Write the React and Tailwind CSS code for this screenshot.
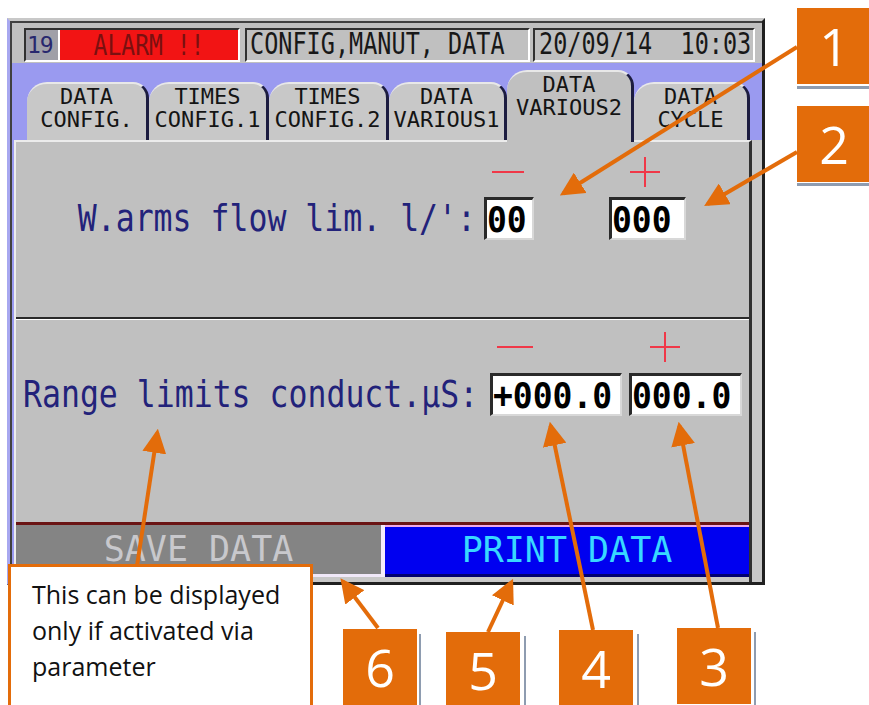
import React from "react";

const mono = { fontFamily: '"DejaVu Sans Mono", "Liberation Mono", monospace' };

const tabs = [
  { top: "DATA", bottom: "CONFIG.", w: "w-[122px]" },
  { top: "TIMES", bottom: "CONFIG.1", w: "w-[120px]" },
  { top: "TIMES", bottom: "CONFIG.2", w: "w-[120px]" },
  { top: "DATA", bottom: "VARIOUS1", w: "w-[118px]" },
  { top: "DATA", bottom: "VARIOUS2", w: "w-[127px]", active: true },
  { top: "DATA", bottom: "CYCLE", w: "w-[116px]" },
];

function Minus({ w = "w-[32px]" }) {
  return <div className={`${w} h-[2px] bg-[#f03848]`} />;
}

function Plus() {
  return (
    <svg width="30" height="30" viewBox="0 0 30 30">
      <path d="M0 15H30M15 0V30" stroke="#f03848" strokeWidth="2" />
    </svg>
  );
}

function Field({ value, w }) {
  return (
    <div
      className={`${w} h-[43px] bg-white border-t-[3px] border-l-[3px] border-[#2a2a2a] border-r-2 border-b-2 border-r-[#d8d8d8] border-b-[#d8d8d8] flex items-center overflow-hidden`}
    >
      <span className="text-[33px] font-bold text-black leading-none scale-y-110 inline-block whitespace-pre" style={mono}>
        {value}
      </span>
    </div>
  );
}

function Callout({ n, className }) {
  return (
    <div className={`absolute w-[74px] h-[76px] bg-[#e36c0a] flex items-center justify-center text-white text-[52px] leading-none ${className}`} style={{ fontFamily: '"Open Sans", sans-serif' }}>
      {n}
    </div>
  );
}

function Screen() {
  return (
    <div className="ml-[7px] mt-[18px] w-[758px] h-[567px] border-l-[3px] border-l-[#a8a8f0] border-t-[3px] border-t-[#c8c8c8] border-r-[3px] border-r-[#202020] border-b-[3px] border-b-[#202020] bg-[#c0c0c0] flex flex-col">
      {/* header */}
      <div className="h-[42px] border-l-2 border-t-2 border-[#404040] flex items-start pt-[5px] pl-[12px]" style={mono}>
        <div className="w-[216px] h-[34px] border-2 border-[#303030] border-r-white border-b-white flex">
          <div className="w-[32px] bg-[#a0a0a8] text-[#28286e] text-[23px] leading-[30px] tracking-[-1px] pl-[1px]">19</div>
          <div className="flex-1 bg-[#f21414] border-l-2 border-white flex items-center justify-center">
            <span className="text-[#7a1010] text-[23px] leading-none scale-y-125 inline-block whitespace-pre">ALARM !!</span>
          </div>
        </div>
        <div className="ml-[5px] w-[285px] h-[34px] border-2 border-[#303030] border-r-white border-b-white pl-[3px] flex items-center overflow-hidden">
          <span className="text-[#181818] text-[23.5px] leading-none scale-y-125 inline-block whitespace-pre">CONFIG,MANUT, DATA</span>
        </div>
        <div className="ml-[3px] w-[222px] h-[34px] border-2 border-[#303030] border-r-white border-b-white pl-[4px] flex items-center overflow-hidden">
          <span className="text-[#181818] text-[23.5px] leading-none scale-y-125 inline-block whitespace-pre">20/09/14  10:03</span>
        </div>
      </div>

      {/* tabs */}
      <div className="h-[77px] bg-[#9a9af0] flex items-end pl-[15px] pr-[4px] border-l-2 border-[#404040]" style={mono}>
        {tabs.map((t, i) => (
          <div
            key={i}
            className={`${t.w} ${t.active ? "h-[72px] bg-[#c0c0c0] z-10 -mb-[2px]" : "h-[58px] bg-[#c8c8c8]"} rounded-tl-[20px] rounded-tr-[16px] border-t-2 border-t-[#e8e8e8] border-r-[3px] border-r-[#1c1c40] flex flex-col items-center justify-start pt-[1px] text-[#141414] text-[22px] leading-[23px] whitespace-pre`}
          >
            <span>{t.top}</span>
            <span>{t.bottom}</span>
          </div>
        ))}
      </div>

      {/* content */}
      <div className="flex-1 flex border-l-2 border-[#404040]">
        <div className="w-[2px] bg-[#9a9af0]" />
        <div className="w-[738px] flex flex-col border-t-2 border-l-2 border-[#ececec] border-r-[3px] border-r-[#303030]">
          {/* section 1 */}
          <div className="h-[175px] pt-[15px]">
            <div className="h-[30px] flex items-center">
              <div className="ml-[476px]"><Minus /></div>
              <div className="ml-[106px]"><Plus /></div>
            </div>
            <div className="mt-[10px] flex items-center">
              <div className="w-[468px] flex justify-end pr-[8px]">
                <span className="text-[31.5px] text-[#22227a] leading-none scale-y-[1.2] inline-block whitespace-pre" style={mono}>W.arms flow lim. l/':</span>
              </div>
              <Field value="00" w="w-[50px]" />
              <div className="ml-[75px]"><Field value="000" w="w-[77px]" /></div>
            </div>
          </div>
          <div className="h-[3px] border-t-2 border-[#2a2a2a] border-b border-b-white" />
          {/* section 2 */}
          <div className="h-[202px] pt-[12px]">
            <div className="h-[30px] flex items-center">
              <div className="ml-[481px]"><Minus w="w-[36px]" /></div>
              <div className="ml-[117px]"><Plus /></div>
            </div>
            <div className="mt-[11px] flex items-center">
              <div className="w-[474px] flex justify-start pl-[7px]">
                <span className="text-[31.5px] text-[#22227a] leading-none scale-y-[1.2] inline-block whitespace-pre" style={mono}>Range limits conduct.µS:</span>
              </div>
              <Field value="+000.0" w="w-[132px]" />
              <div className="ml-[7px]"><Field value="000.0" w="w-[113px]" /></div>
            </div>
          </div>
          {/* buttons */}
          <div className="h-[55px] border-t-[3px] border-[#6a1414] flex" style={mono}>
            <div className="w-[365px] bg-[#848484] border-b-[3px] border-[#f0e8f8] flex items-center justify-center">
              <span className="text-[35px] text-[#c8c8cc] leading-none whitespace-pre">SAVE DATA</span>
            </div>
            <div className="w-[4px] bg-[#f4ecfa]" />
            <div className="flex-1 bg-[#0000f0] border-t-2 border-[#f0a8e8] border-b-[3px] border-b-[#000070] flex items-center justify-center">
              <span className="text-[35px] text-[#38d8ff] leading-none whitespace-pre">PRINT DATA</span>
            </div>
          </div>
          <div className="flex-1 bg-[#c8c8c8]" />
        </div>
        <div className="flex-1 bg-[#c8c8c8]" />
      </div>
    </div>
  );
}

export default function App() {
  const arrows = [
    [797, 47, 548, 203],
    [797, 152, 692, 213],
    [718, 628, 676, 408],
    [593, 630, 547, 408],
    [488, 632, 519, 566],
    [378, 628, 332, 567],
    [137, 566, 160, 415],
  ];
  return (
    <div className="relative w-[869px] h-[705px] bg-white overflow-hidden">
      <Screen />

      {/* callout text */}
      <div
        className="absolute left-[8px] top-[564px] w-[305px] h-[150px] bg-white border-[3px] border-[#e36c0a] pl-[21px] pt-[9px] text-[25px] leading-[36px] text-[#111] whitespace-nowrap"
        style={{ fontFamily: '"Open Sans", "Lato", sans-serif' }}
      >
        This can be displayed
        <br />
        only if activated via
        <br />
        parameter
      </div>

      {/* number callouts */}
      <Callout n="1" className="left-[797px] top-[8px]" />
      <div className="absolute left-[797px] top-[86px] w-[72px] h-[3px] bg-[#8e9cb0]" />
      <Callout n="2" className="left-[797px] top-[106px]" />
      <div className="absolute left-[797px] top-[183px] w-[72px] h-[3px] bg-[#8e9cb0]" />
      <Callout n="6" className="left-[343px] top-[629px]" />
      <div className="absolute left-[419px] top-[634px] w-[2px] h-[71px] bg-[#8e9cb0]" />
      <Callout n="5" className="left-[446px] top-[632px]" />
      <div className="absolute left-[524px] top-[636px] w-[2px] h-[69px] bg-[#8e9cb0]" />
      <Callout n="4" className="left-[559px] top-[630px]" />
      <div className="absolute left-[637px] top-[634px] w-[2px] h-[71px] bg-[#8e9cb0]" />
      <Callout n="3" className="left-[677px] top-[628px]" />
      <div className="absolute left-[754px] top-[632px] w-[2px] h-[73px] bg-[#8e9cb0]" />

      {/* arrows */}
      <svg className="absolute inset-0 pointer-events-none" width="869" height="705" viewBox="0 0 869 705">
        <defs>
          <marker id="head" markerWidth="6" markerHeight="6" refX="5" refY="3" orient="auto" markerUnits="strokeWidth">
            <path d="M0 0L6 3L0 6Z" fill="#e36c0a" />
          </marker>
        </defs>
        {arrows.map(([x1, y1, x2, y2], i) => {
          const dx = x2 - x1;
          const dy = y2 - y1;
          const len = Math.hypot(dx, dy);
          const ex = x2 - (dx / len) * 18;
          const ey = y2 - (dy / len) * 18;
          return (
            <line key={i} x1={x1} y1={y1} x2={ex} y2={ey} stroke="#e36c0a" strokeWidth="4" markerEnd="url(#head)" />
          );
        })}
      </svg>
    </div>
  );
}
